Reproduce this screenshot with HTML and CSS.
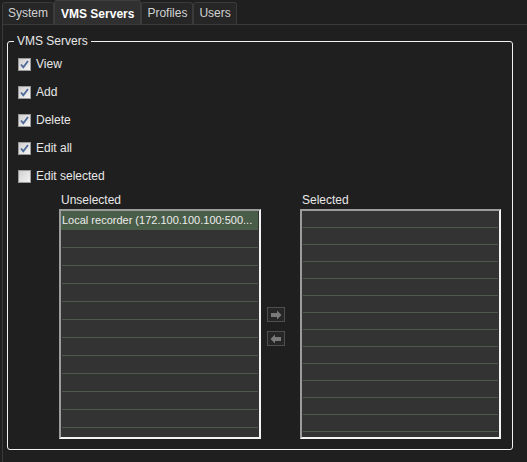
FILE: index.html
```html
<!DOCTYPE html>
<html>
<head>
<meta charset="utf-8">
<link rel="stylesheet" href="styles.css">
</head>
<body>
<div class="tabs">
  <div class="tab">System</div>
  <div class="tab active">VMS Servers</div>
  <div class="tab">Profiles</div>
  <div class="tab">Users</div>
</div>
<div class="panel">
  <fieldset class="group">
    <legend>VMS Servers</legend>
    <div class="checks">
      <label class="check"><span class="box"><svg width="13" height="13" viewBox="0 0 13 13"><path d="M3 6.5 L5.3 9.2 L10 3" fill="none" stroke="#4d6a98" stroke-width="1.8"/></svg></span>View</label>
      <label class="check"><span class="box"><svg width="13" height="13" viewBox="0 0 13 13"><path d="M3 6.5 L5.3 9.2 L10 3" fill="none" stroke="#4d6a98" stroke-width="1.8"/></svg></span>Add</label>
      <label class="check"><span class="box"><svg width="13" height="13" viewBox="0 0 13 13"><path d="M3 6.5 L5.3 9.2 L10 3" fill="none" stroke="#4d6a98" stroke-width="1.8"/></svg></span>Delete</label>
      <label class="check"><span class="box"><svg width="13" height="13" viewBox="0 0 13 13"><path d="M3 6.5 L5.3 9.2 L10 3" fill="none" stroke="#4d6a98" stroke-width="1.8"/></svg></span>Edit all</label>
      <label class="check"><span class="box"></span>Edit selected</label>
    </div>
    <div class="lists">
      <div class="col left">
        <div class="cap">Unselected</div>
        <div class="list rows18">
          <div class="row sel">Local recorder (172.100.100.100:500...</div>
          <div class="row"></div><div class="row"></div><div class="row"></div>
          <div class="row"></div><div class="row"></div><div class="row"></div>
          <div class="row"></div><div class="row"></div><div class="row"></div>
          <div class="row"></div><div class="row"></div><div class="row"></div>
        </div>
      </div>
      <div class="mid">
        <div class="btn"><svg width="18" height="14" viewBox="0 0 18 14"><path d="M4 5 H10 V2.5 L14.5 7 L10 11.5 V9 H4 Z" fill="#7a7a7a"/></svg></div>
        <div class="btn"><svg width="18" height="14" viewBox="0 0 18 14"><path d="M14 5 H8 V2.5 L3.5 7 L8 11.5 V9 H14 Z" fill="#7a7a7a"/></svg></div>
      </div>
      <div class="col right">
        <div class="cap">Selected</div>
        <div class="list rows17">
          <div class="row"></div><div class="row"></div><div class="row"></div>
          <div class="row"></div><div class="row"></div><div class="row"></div>
          <div class="row"></div><div class="row"></div><div class="row"></div>
          <div class="row"></div><div class="row"></div><div class="row"></div>
          <div class="row"></div><div class="row"></div>
        </div>
      </div>
    </div>
  </fieldset>
</div>
</body>
</html>
```
FILE: styles.css
```css
html, body {
  margin: 0;
  padding: 0;
  background: #1f1f1f;
  height: 100%;
  overflow: hidden;
}
body {
  font-family: "Liberation Sans", Arial, sans-serif;
  font-size: 12px;
  color: #e4e4e4;
}
.tabs {
  display: flex;
  align-items: flex-end;
  height: 24px;
  padding-left: 2px;
}
.tab {
  box-sizing: border-box;
  height: 22px;
  line-height: 21px;
  padding: 0 5px;
  border: 1px solid #3a3a3a;
  border-bottom: none;
  border-radius: 3px 3px 0 0;
  background: #262626;
  color: #d2d2d2;
}
.tab.active {
  height: 24px;
  line-height: 26px;
  padding: 0 6px;
  background: #303030;
  color: #ffffff;
  font-weight: bold;
  border-color: #3e3e3e;
}
.panel {
  margin-left: 2px;
  border-top: 1px solid #3a3a3a;
  border-left: 1px solid #3a3a3a;
  height: 440px;
  padding: 9px 0 0 4px;
}
.group {
  box-sizing: border-box;
  width: 506px;
  height: 416px;
  margin: 0;
  padding: 0;
  border: 1px solid #f2f2f2;
  border-radius: 3px;
}
.group legend {
  margin-left: 6px;
  padding: 0 3px;
  line-height: 14px;
  color: #e8e8e8;
}
.checks {
  padding: 2px 0 0 10px;
  display: flex;
  flex-direction: column;
}
.check {
  display: flex;
  align-items: center;
  height: 28px;
  color: #e8e8e8;
}
.box {
  box-sizing: border-box;
  width: 13px;
  height: 13px;
  margin-right: 5px;
  border: 1px solid #9a9a9a;
  background: linear-gradient(135deg, #d0d0d0, #f4f4f4);
  display: flex;
}
.box svg { margin: -1px; }
.lists {
  display: flex;
  margin-top: 2px;
  padding-left: 51px;
}
.cap {
  height: 17px;
  line-height: 17px;
  padding-left: 2px;
  color: #e8e8e8;
}
.list {
  box-sizing: border-box;
  height: 230px;
  border: 2px solid;
  border-color: #9c9c9c #f4f4f4 #f4f4f4 #9c9c9c;
  background: #333333;
  overflow: hidden;
  padding: 0 1px 0 0;
}
.left .list { width: 202px; }
.right .list { width: 201px; }
.row {
  box-sizing: border-box;
  border-bottom: 1px solid #4b5a49;
  margin: 0 0 0 1px;
  white-space: nowrap;
  overflow: hidden;
}
.rows18 .row { height: 18px; line-height: 18px; }
.rows17 .row { height: 17px; }
.row.sel {
  background: #4a5d49;
  color: #ececec;
  margin: 0;
  padding-left: 1px;
  font-size: 11px;
  height: 19px;
  line-height: 19px;
  border-bottom-color: #4a5d49;
}
.mid {
  width: 39px;
  display: flex;
  flex-direction: column;
  padding: 115px 0 0 6px;
  box-sizing: border-box;
  gap: 9px;
}
.btn {
  box-sizing: border-box;
  width: 18px;
  height: 15px;
  border: 1px solid #4e4e4e;
  background: #262626;
  display: flex;
  align-items: center;
  justify-content: center;
}
.btn svg { flex: none; }
```
